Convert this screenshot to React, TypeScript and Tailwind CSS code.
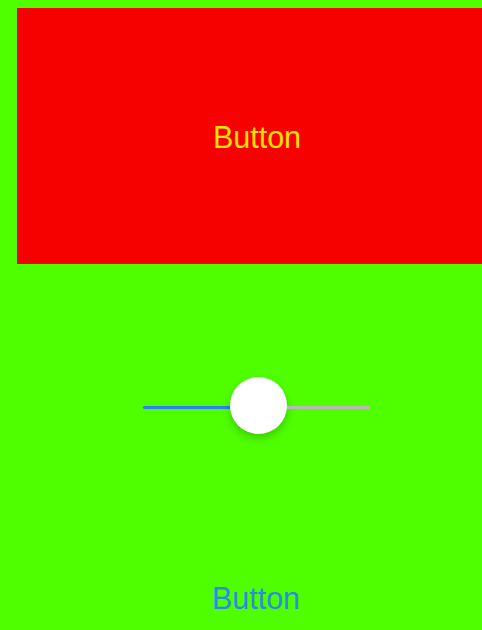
export default function App() {
  const fill = 87;

  return (
    <div className="w-[482px] h-[630px] overflow-hidden bg-[#4fff00] flex flex-col font-['Liberation_Sans',Arial,sans-serif]">
      {/* big red button */}
      <button className="ml-[17px] mt-[8px] w-[480px] h-[256px] shrink-0 bg-[#f60000] flex items-center justify-center pt-[2px] text-[30.5px] leading-none text-[#ffe000]">
        Button
      </button>

      {/* slider */}
      <div className="mt-[113px] ml-[143px] w-[227px] h-[57px] flex items-center shrink-0">
        <div className="h-[3px] mt-[3px] bg-[#2f80f0] rounded-l-full" style={{ width: fill }} />
        <div className="w-[57px] h-[57px] shrink-0 rounded-full bg-white shadow-[0_4px_8px_rgba(0,0,0,0.22)]" />
        <div className="h-[3px] mt-[3px] flex-1 bg-[#b8b8b8] rounded-r-full" />
      </div>

      {/* plain text button */}
      <button className="mt-[149px] ml-[16px] w-[480px] h-[30px] shrink-0 text-[30.5px] leading-none text-[#2a8de0] text-center">
        Button
      </button>
    </div>
  );
}
